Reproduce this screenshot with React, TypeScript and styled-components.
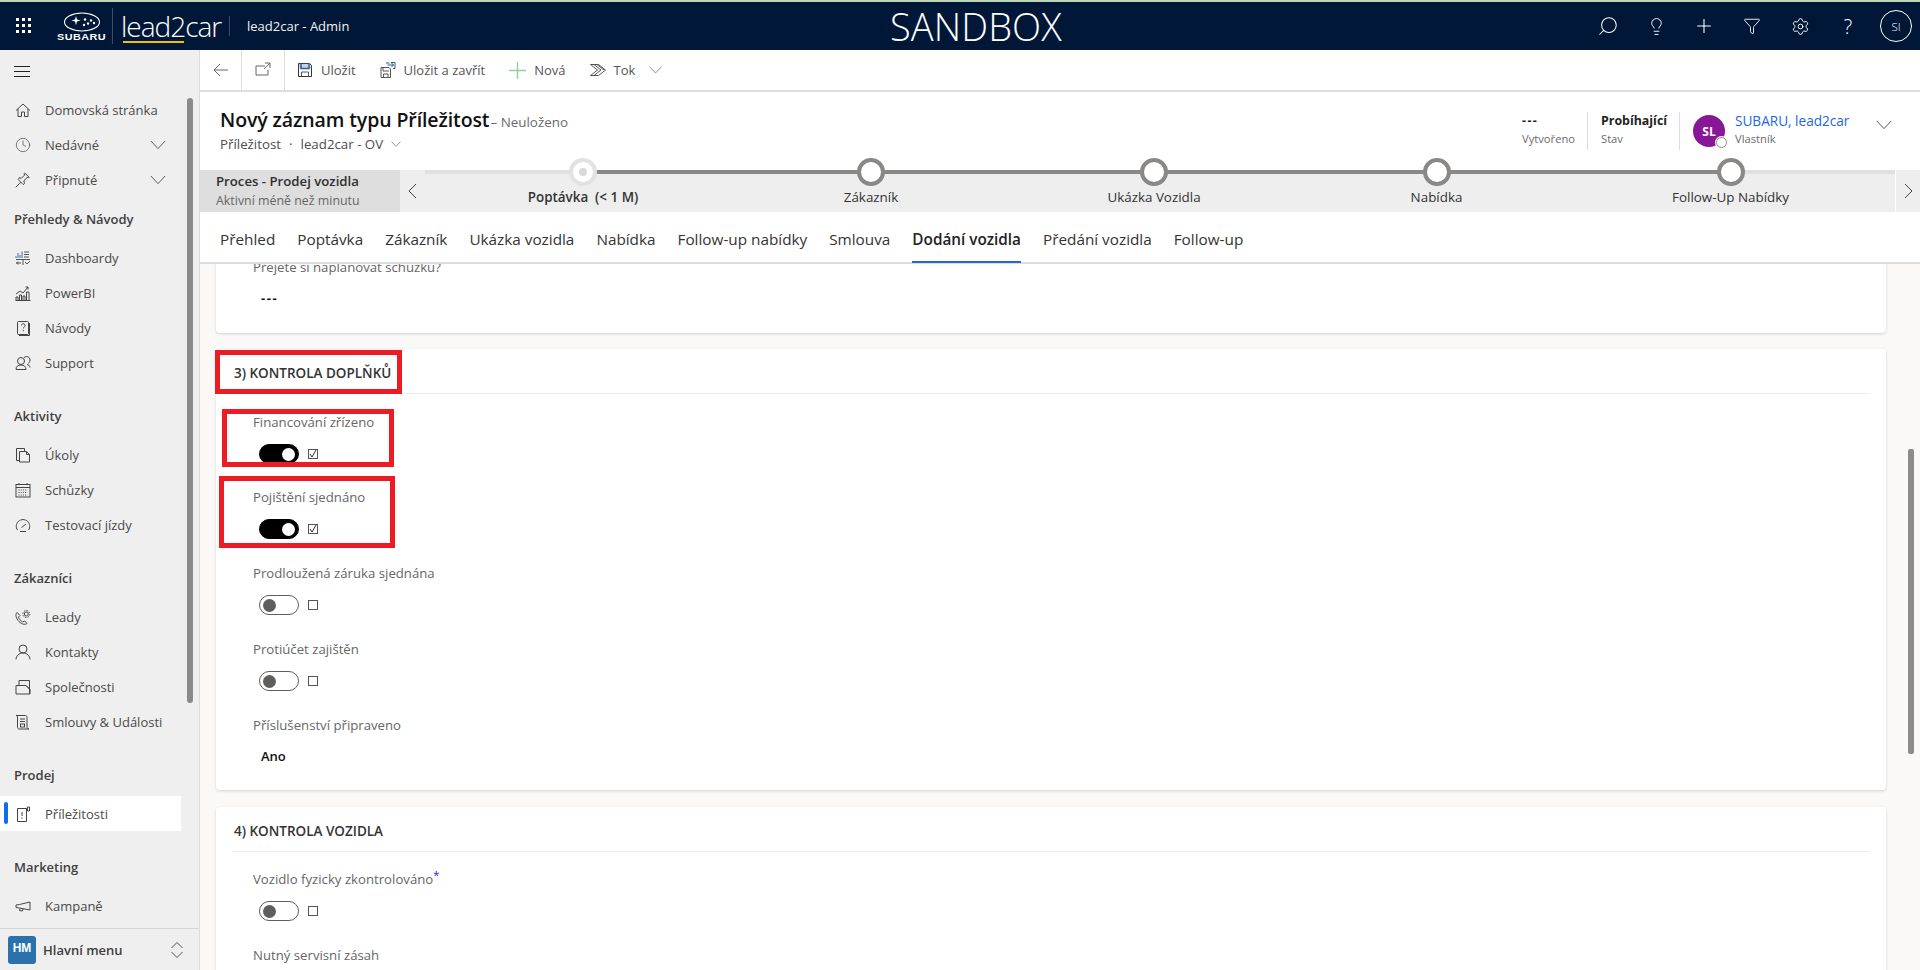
import React from "react";
import styled, { createGlobalStyle } from "styled-components";
import { Clock, Settings, Lightbulb, Funnel, Search, Plus } from "lucide-react";

const Global = createGlobalStyle`
  html, body { margin: 0; padding: 0; height: 100%; overflow: hidden; background: #fff; }
  body { font-family: "Open Sans", "Noto Sans", "Liberation Sans", sans-serif; }
  * { box-sizing: border-box; }
`;

const Page = styled.div`
  width: 1920px; height: 970px; display: flex; flex-direction: column; overflow: hidden;
`;
const TopLine = styled.div`height: 2px; background: #bcd6b6; flex: none;`;
const Header = styled.header`
  height: 48px; flex: none; background: #001737; color: #fff; display: flex; align-items: center; position: relative;
`;
const Waffle = styled.div`
  width: 48px; display: flex; justify-content: center; padding-left: 0;
`;
const SubaruBlock = styled.div`
  margin-left: 9px; width: 50px; display: flex; flex-direction: column; align-items: center;
`;
const SubaruWord = styled.span`
  font-family: "Liberation Sans", sans-serif; font-weight: 700; font-size: 9.5px; line-height: 9px; letter-spacing: 0.4px; transform: scaleX(1.14);
`;
const LogoDivider = styled.div`
  width: 1px; height: 36px; background: #3c4c63; margin-left: 5px;
`;
const BrandWord = styled.span`
  position: relative; margin-left: 8px; font-size: 28px; font-weight: 300; letter-spacing: -1px; line-height: 40px; width: 100px;
`;
const BrandUnderline = styled.i`
  position: absolute; left: 2px; top: 35px; width: 61px; height: 2px; background: #f2c200;
`;
const ShortDivider = styled.div`width: 1px; height: 20px; background: #3c4c63; margin-left: 8px;`;
const AppName = styled.span`margin-left: 17px; font-size: 13px; font-weight: 500; color: #f2f2f2;`;
const Sandbox = styled.div`
  position: absolute; left: 890px; top: 0; line-height: 48px; font-size: 38px; font-weight: 300; letter-spacing: 0.1px;
`;
const HeaderIcons = styled.div`margin-left: auto; display: flex; align-items: center;`;
const HeaderCell = styled.div`
  width: 48px; height: 48px; display: flex; align-items: center; justify-content: center; font-size: 20px; font-weight: 300;
`;
const FlipIcon = styled.span`display: flex; transform: scaleX(-1);`;
const UserCircle = styled.div`
  width: 32px; height: 32px; border: 1px solid #fff; border-radius: 50%; font-size: 11.5px; display: flex; align-items: center; justify-content: center;
`;

const Body = styled.div`flex: 1; display: flex; min-height: 0;`;
const Sidebar = styled.nav`
  width: 200px; flex: none; background: #efefef; border-right: 1px solid #dcdcdc; display: flex; flex-direction: column; position: relative;
`;
const Burger = styled.div`height: 42px; flex: none; padding-left: 14px; display: flex; align-items: center; color: #222;`;
const NavScroll = styled.div`flex: 1; min-height: 0; overflow: hidden;`;
const NavThumb = styled.div`
  position: absolute; left: 187px; top: 48px; width: 6px; height: 605px; border-radius: 3px; background: #8a8a8a;
`;
const NavItem = styled.div<{ $active?: boolean }>`
  height: 35px; width: 181px; display: flex; align-items: center; padding-left: 15px; position: relative;
  font-size: 13px; color: #4a4a4a; background: ${(p) => (p.$active ? "#fff" : "transparent")};
  ${(p) => p.$active && `&::before { content: ""; position: absolute; left: 4px; top: 6px; width: 4px; height: 22px; border-radius: 2px; background: #0f6cf2; }`}
`;
const NavGlyph = styled.span`width: 16px; height: 16px; display: flex; margin-right: 14px; color: #444; flex: none;`;
const NavCaret = styled.span`margin-left: auto; margin-right: 15px; display: flex; color: #555;`;
const GroupTitle = styled.div<{ $first?: boolean }>`
  height: 43px; margin-top: ${(p) => (p.$first ? "0" : "14px")}; padding-left: 14px; display: flex; align-items: center;
  font-size: 13px; font-weight: 600; color: #3f3f3f;
`;
const NavFooter = styled.div`
  height: 42px; flex: none; border-top: 1px solid #d6d6d6; display: flex; align-items: center; padding-left: 8px;
`;
const AreaBadge = styled.div`
  width: 28px; height: 28px; border-radius: 3px; background: #2a72ae; color: #fff; font-family: "Liberation Sans", sans-serif; font-size: 12px; font-weight: 700;
  display: flex; align-items: center; justify-content: center; padding-bottom: 3px;
`;
const AreaName = styled.span`margin-left: 7px; font-size: 13px; font-weight: 600; color: #3f3f3f;`;
const AreaSwitch = styled.span`margin-left: auto; margin-right: 16px; display: flex; color: #555;`;

const Main = styled.main`flex: 1; min-width: 0; display: flex; flex-direction: column;`;
const Toolbar = styled.div`
  height: 42px; flex: none; display: flex; align-items: stretch; border-bottom: 2px solid #dedede; font-size: 13px; color: #555;
`;
const NavButton = styled.div<{ $w: number }>`
  width: ${(p) => p.$w}px; border-right: 1px solid #dedede; display: flex; align-items: center; justify-content: center; color: #666;
`;
const Action = styled.div`
  display: flex; align-items: center; gap: 8px; padding: 0 12px; 
`;
const ActionGroup = styled.div`display: flex;`;
const Caret = styled.span`display: flex; margin-left: 6px; color: #777;`;

const RecordHead = styled.div`
  height: 78px; flex: none; display: flex; justify-content: space-between; padding: 14px 28px 0 20px;
`;
const TitleLine = styled.div`display: flex; align-items: baseline; gap: 1px; height: 27px;`;
const RecordTitle = styled.h1`
  margin: 0; font-size: 19.5px; font-weight: 600; color: #111; line-height: 27px; letter-spacing: -0.1px;
`;
const Unsaved = styled.span`font-size: 13.4px; color: #6b6b6b;`;
const SubLine = styled.div`
  margin-top: 2px; font-size: 13.3px; font-weight: 500; color: #4d4d4d; display: flex; align-items: center; gap: 8px;
`;
const Stats = styled.div`display: flex; align-items: flex-start; padding-top: 6px;`;
const Stat = styled.div<{ $w: number }>`
  width: ${(p) => p.$w}px; height: 38px; margin-right: 13px; border-right: 1px solid #dcdcdc; padding-top: 0;
`;
const StatValue = styled.div`font-size: 12.4px; font-weight: 700; color: #222; line-height: 17px;`;
const StatDash = styled(StatValue)`letter-spacing: 1.4px;`;
const StatLabel = styled.div`font-size: 11.2px; color: #6b6b6b; line-height: 16px; margin-top: 2px;`;
const OwnerAvatar = styled.div`
  width: 32px; height: 32px; border-radius: 50%; background: #881798; color: #fff; position: relative; flex: none; margin-top: 3px;
  font-size: 12px; font-weight: 700; display: flex; align-items: center; justify-content: center;
  &::after { content: ""; position: absolute; right: -2px; bottom: -1px; width: 9px; height: 9px; border-radius: 50%; background: #fff; border: 1.5px solid #8a8a8a; box-shadow: 0 0 0 1px #fff; }
`;
const OwnerText = styled.div`margin-left: 10px; width: 141px;`;
const OwnerName = styled.div`font-size: 13.6px; color: #2266e3; line-height: 17px; font-weight: 500;`;
const OwnerCaret = styled.span`display: flex; margin-top: 8px; color: #555;`;

const ProcessBar = styled.div`
  height: 42px; flex: none; background: #eeeeee; display: flex;
`;
const ProcessInfo = styled.div`
  width: 200px; background: #dedede; padding: 3px 0 0 16px; flex: none;
`;
const ProcessName = styled.div`font-size: 13.2px; font-weight: 600; color: #2f2f2f; line-height: 17px;`;
const ProcessAge = styled.div`font-size: 12.4px; color: #666; line-height: 17px; margin-top: 2px; white-space: nowrap;`;
const ProcessArrow = styled.div<{ $right?: boolean }>`
  width: 25px; flex: none; display: flex; align-items: center; justify-content: center; color: #444;
  ${(p) => p.$right && "border-left: 1px solid #fff;"}
`;
const Stages = styled.div`
  flex: 1; position: relative; display: grid; grid-template-columns: 316px 260px 306px 259px 329px;
  &::before { content: ""; position: absolute; left: 0; right: 0; top: 0; height: 4px; background: #e0e0e0; }
  &::after { content: ""; position: absolute; left: 158px; width: 1147px; top: 0; height: 4px; background: #8a8886; }
`;
const Stage = styled.div`position: relative; text-align: center; padding-top: 18px; font-size: 13.4px; line-height: 18px; color: #333;`;
const StageDot = styled.i<{ $active?: boolean }>`
  position: absolute; z-index: 2; left: 50%; top: -12px; margin-left: -14px; width: 28px; height: 28px; border-radius: 50%; background: #fff;
  border: 4px solid ${(p) => (p.$active ? "#e2e2e2" : "#8a8886")};
  ${(p) => p.$active && `&::after { content: ""; position: absolute; left: 6px; top: 6px; width: 8px; height: 8px; border-radius: 50%; background: #d8d8d8; }`}
`;
const StageActive = styled.span`font-weight: 600; white-space: pre;`;

const Tabs = styled.div`
  height: 52px; flex: none; border-bottom: 2px solid #dcdcdc; display: flex; padding-left: 9px; background: #fff;
`;
const Tab = styled.div<{ $active?: boolean }>`
  padding: 0 11px; position: relative; display: flex; align-items: center; font-size: 15.3px; color: #333; height: 50px; padding-top: 4px; white-space: nowrap;
  ${(p) => p.$active && `font-weight: 600; color: #222; &::after { content: ""; position: absolute; left: 11px; right: 11px; bottom: -1px; height: 2px; background: #2266e3; }`}
`;

const Content = styled.div`
  flex: 1; min-height: 0; background: #faf9f8; overflow: hidden; padding: 0 34px 0 16px; position: relative;
`;
const ContentThumb = styled.div`
  position: absolute; left: 1708px; top: 185px; width: 6px; height: 305px; border-radius: 2px; background: #8c8c8a;
`;
const Card = styled.section`
  background: #fff; border-radius: 4px; box-shadow: 0 1px 3px rgba(0,0,0,.16); position: relative; margin-bottom: 17px;
`;
const CutCard = styled(Card)`
  margin-top: -12px; height: 81px; padding: 5px 0 0 37px; margin-bottom: 16px;
`;
const SectionHead = styled.h2`
  margin: 0 16px; height: 45px; padding: 3px 0 0 2px; display: flex; align-items: center; border-bottom: 1px solid #ececec;
  font-size: 13.5px; font-weight: 550; color: #333;
`;
const Fields = styled.div<{ $lead?: boolean }>`
  padding: ${(p) => (p.$lead ? "18px" : "17px")} 0 0 37px;
  ${(p) => p.$lead && "& > div:first-child { height: 75px; }"}
`;
const Field = styled.div`
  height: 76px; &:last-child { height: 75px; }
`;
const FieldLabel = styled.div`font-size: 13.2px; line-height: 20px; color: #666; white-space: nowrap;`;
const Required = styled.sup`color: #2020e0; font-size: 11px; line-height: 0;`;
const ToggleRow = styled.div`display: flex; align-items: center; margin: 12px 0 0 6px; gap: 9px;`;
const Switch = styled.span<{ $on?: boolean }>`
  width: 40px; height: 20px; border-radius: 10px; position: relative; display: block; flex: none;
  border: 1px solid ${(p) => (p.$on ? "#000" : "#605e5c")}; background: ${(p) => (p.$on ? "#000" : "#fff")};
  &::after {
    content: ""; position: absolute; top: 2.5px; width: 13px; height: 13px; border-radius: 50%;
    ${(p) => (p.$on ? "right: 3px; background: #fff;" : "left: 3px; background: #605e5c;")}
  }
`;
const Box = styled.span`
  width: 10px; height: 10px; border: 1px solid #555; display: flex; align-items: center; justify-content: center; color: #333; flex: none;
`;
const FieldValue = styled.div`font-size: 13px; font-weight: 600; color: #111; margin: 12px 0 0 8px; line-height: 18px;`;
const FieldDash = styled(FieldValue)`letter-spacing: 1.6px; font-weight: 700;`;
const RedFrame = styled.div<{ $l: number; $t: number; $w: number; $h: number }>`
  position: absolute; left: ${(p) => p.$l}px; top: ${(p) => p.$t}px; width: ${(p) => p.$w}px; height: ${(p) => p.$h}px;
  border: 5px solid #ed1c24; pointer-events: none;
`;

type IP = { size?: number };
const S = ({ size = 16, children, vb = "0 0 16 16" }: { size?: number; children: React.ReactNode; vb?: string }) => (
  <svg width={size} height={size} viewBox={vb} fill="none" stroke="currentColor" strokeWidth="1">{children}</svg>
);
const WaffleIcon = () => (
  <svg width="16" height="16" viewBox="0 0 16 16" fill="#fff">
    {[0, 6, 12].flatMap((y) => [0, 6, 12].map((x) => <rect key={`${x}-${y}`} x={x} y={y} width="3" height="3" />))}
  </svg>
);
const SubaruMark = () => (
  <svg width="38" height="20" viewBox="0 0 38 20" fill="none">
    <ellipse cx="19" cy="10" rx="17.5" ry="9" stroke="#fff" strokeWidth="1.1" />
    <path d="M13 4l1 3.6 3.6 1-3.6 1-1 3.6-1-3.6-3.6-1 3.6-1z" fill="#fff" />
    <circle cx="22" cy="7.5" r="1.2" fill="#fff" /><circle cx="28" cy="8.5" r="1.2" fill="#fff" />
    <circle cx="25" cy="11.5" r="1.2" fill="#fff" /><circle cx="31" cy="11" r="1.2" fill="#fff" /><circle cx="21" cy="13" r="1.2" fill="#fff" />
  </svg>
);
const Chevron = ({ size = 16 }: IP) => (
  <svg width={size} height={size * 0.6} viewBox="0 0 16 10" fill="none" stroke="currentColor"><path d="M.5 1l7.5 8 7.5-8" /></svg>
);
const HomeI = () => <S><path d="M1 8.5L8 2l7 6.5M3 7v7.5h3.5V10h3v4.5H13V7" /></S>;
const PinI = () => <S><path d="M.8 15.2l5-5M3.3 7.6l5.1 5.1 1-1-.5-3 3.2-3.2 1.6.3.5-.5L9.7 1l-.5.5.3 1.6-3.2 3.2-2-.7z" /></S>;
const DashI = () => <S><path d="M1 8V6M3 8V3M5 8V5M7 8V1.500" stroke="#4a6f9c" /><path d="M9 2h5M9 4.500h5M9 7h5M1 9.500h14M8 9.500V15M10 12l2 2 3-3" stroke="#555" /><path d="M3 11.500l-1.500 1.500 1.500 1.500M1.500 13H6" /></S>;
const BiI = () => <S><path d="M1 15v-3h2v3M4.500 15v-5h2v5M8 15v-4h2v4M11.500 15V7h2.500v8M.5 15.500h15M1 9l4-3 3 2 5-6M13 2h-2.500M13 2v2.500" /></S>;
const GuideI = () => <S><rect x="2.500" y="1.500" width="11" height="13" rx="1" /><path d="M14.500 3v12.500H4" /><path d="M6.500 5.500c0-2.400 3.500-2.400 3.500 0 0 1.500-1.700 1.500-1.700 3M8.300 10v1.200" /></S>;
const SupportI = () => <S><circle cx="6" cy="6" r="3.500" /><path d="M1 14.500c0-3 2-4.500 5-4.500s5 1.500 5 4.500zM9 2.500c3-2 6-.5 6 2.500 0 2-1 3-2 3.300M12 9.500c1.500.3 3 1.200 3 3" /></S>;
const TaskI = () => <S><path d="M1.500 1.500h8v3M1.500 1.500v12h3M4.500 4.500h7l3 3v7.500h-10zM11.500 4.500v3h3" /></S>;
const CalI = () => <S><rect x="1" y="2.500" width="14" height="12.500" /><path d="M1 5.500h14M4 1v2M12 1v2" /><path d="M3.500 8h9M3.500 10.500h9M3.500 13h9" strokeDasharray="1 1.200" /></S>;
const GaugeI = () => <S><path d="M2.500 13C.5 10.500 1 6.500 3.500 4.300 6 2 10 2 12.500 4.300 15 6.500 15.500 10.500 13.500 13M5 14.500h6M6.500 10.500L11 7" /></S>;
const LeadI = () => <S><path d="M2 3.500c-2 2-1 6 2 9s6 3.500 8 2l-2.300-2.500-2 1C6 12 4 10 3.500 8l1.500-1.500zM3.500 8" /><circle cx="11.300" cy="5" r="2" /><circle cx="11.300" cy="5" r="3.500" strokeDasharray="1.500 1.200" /></S>;
const PersonI = () => <S><circle cx="8" cy="5" r="4" /><path d="M1 15.500c0-3.500 3-6.500 7-6.500s7 3 7 6.500" /></S>;
const CompanyI = () => <S><path d="M1 15V6.500h10L15 10.500V15zM4 6.500V1.500h10.500V15M11 6.500l4 4" /></S>;
const ContractI = () => <S><path d="M1 1.500h9.500c1 0 1.500 1 1.500 2V13c0 1.500 1 2 2 2H4c-1 0-1.500-1-1.500-2V3c0-.8-.5-1.500-1.500-1.500zM5 5h5M5 7.500h5" /><rect x="5.500" y="10" width="4" height="3" /></S>;
const OppI = () => <S><path d="M2.500 2.500h9v13h-9zM12.500 1v4h2V1z" /><path d="M7 6v4M7 11.500v1.300" /></S>;
const MegaI = () => <S><path d="M1 7v2.500l3.500.5 10.500 2V4L4.500 6.500zM5 10.500l-.5 2 3 .5.5-2" /></S>;
const SortI = () => <svg width="12" height="18" viewBox="0 0 12 18" fill="none" stroke="currentColor"><path d="M.5 7L6 1.500 11.500 7M.5 11L6 16.500 11.500 11" /></svg>;
const BackI = () => <S><path d="M15 8H1M7 2L1 8l6 6" /></S>;
const PopI = () => <S><path d="M10 4H1v9h12V8M10 1h5v5M15 1L9 7" /></S>;
const SaveI = () => <S><path d="M1.500 1.500h11l2 2v11h-13z" stroke="#333" /><path d="M4 1.500v5h8v-5" stroke="#2c5a8c" strokeWidth="1.600" /><path d="M4.500 14.500V10h7v4.500" /><rect x="1.500" y="1.500" width="13" height="5" fill="#5d7ea5" fillOpacity=".35" stroke="none" /></S>;
const SaveCloseI = () => <S><path d="M1 5.500h8l1.500 1.500v8.500H1zM3 5.500v3.500h6M3.500 15.500V12h4.500v3.500" /><path d="M6 1h3.500M7.500 3h6M11.500 1l2 2-2 2M11 .5h4v6h-2" stroke="#2c5a8c" /></S>;
const FlowI = () => <S><path d="M.5 2.500h8l7 5.500-7 5.500h-8l7-5.500zM4 2.500l7 5.500-7 5.500M7 2.500l7 5.500" /></S>;
const AddI = () => <svg width="17" height="17" viewBox="0 0 17 17" stroke="#8fd1a5" strokeWidth="1.400"><path d="M8.500 0v17M0 8.500h17" /></svg>;
const MenuI = () => <svg width="16" height="11" viewBox="0 0 16 11" stroke="currentColor"><path d="M0 .5h16M0 5.500h16M0 10.500h16" /></svg>;
const ThinLeft = () => <svg width="9" height="16" viewBox="0 0 9 16" fill="none" stroke="currentColor"><path d="M8 1L1 8l7 7" /></svg>;
const ThinRight = () => <svg width="9" height="16" viewBox="0 0 9 16" fill="none" stroke="currentColor"><path d="M1 1l7 7-7 7" /></svg>;
const CheckI = () => <svg width="8" height="8" viewBox="0 0 8 8" fill="none" stroke="currentColor"><path d="M1 4l2 3 4-7" /></svg>;

type NavEntry = { kind: "title"; text: string; first?: boolean } | { kind: "item"; text: string; icon: React.ReactNode; caret?: boolean; active?: boolean };
const nav: NavEntry[] = [
  { kind: "item", text: "Domovská stránka", icon: <HomeI /> },
  { kind: "item", text: "Nedávné", icon: <Clock size={16} strokeWidth={1} />, caret: true },
  { kind: "item", text: "Připnuté", icon: <PinI />, caret: true },
  { kind: "title", text: "Přehledy & Návody", first: true },
  { kind: "item", text: "Dashboardy", icon: <DashI /> },
  { kind: "item", text: "PowerBI", icon: <BiI /> },
  { kind: "item", text: "Návody", icon: <GuideI /> },
  { kind: "item", text: "Support", icon: <SupportI /> },
  { kind: "title", text: "Aktivity" },
  { kind: "item", text: "Úkoly", icon: <TaskI /> },
  { kind: "item", text: "Schůzky", icon: <CalI /> },
  { kind: "item", text: "Testovací jízdy", icon: <GaugeI /> },
  { kind: "title", text: "Zákazníci" },
  { kind: "item", text: "Leady", icon: <LeadI /> },
  { kind: "item", text: "Kontakty", icon: <PersonI /> },
  { kind: "item", text: "Společnosti", icon: <CompanyI /> },
  { kind: "item", text: "Smlouvy & Události", icon: <ContractI /> },
  { kind: "title", text: "Prodej" },
  { kind: "item", text: "Příležitosti", icon: <OppI />, active: true },
  { kind: "title", text: "Marketing" },
  { kind: "item", text: "Kampaně", icon: <MegaI /> },
];
const tabs = ["Přehled", "Poptávka", "Zákazník", "Ukázka vozidla", "Nabídka", "Follow-up nabídky", "Smlouva", "Dodání vozidla", "Předání vozidla", "Follow-up"];
const stages = ["Zákazník", "Ukázka Vozidla", "Nabídka", "Follow-Up Nabídky"];

const ToggleField = ({ label, on, required }: { label: string; on?: boolean; required?: boolean }) => (
  <Field>
    <FieldLabel>{label}{required && <Required>*</Required>}</FieldLabel>
    <ToggleRow>
      <Switch $on={on} />
      <Box>{on && <CheckI />}</Box>
    </ToggleRow>
  </Field>
);

export default function App() {
  return (
    <Page>
      <Global />
      <TopLine />
      <Header>
        <Waffle><WaffleIcon /></Waffle>
        <SubaruBlock><SubaruMark /><SubaruWord>SUBARU</SubaruWord></SubaruBlock>
        <LogoDivider />
        <BrandWord>lead2car<BrandUnderline /></BrandWord>
        <ShortDivider />
        <AppName>lead2car - Admin</AppName>
        <Sandbox>SANDBOX</Sandbox>
        <HeaderIcons>
          <HeaderCell><FlipIcon><Search size={22} strokeWidth={1.1} /></FlipIcon></HeaderCell>
          <HeaderCell><Lightbulb size={19} strokeWidth={1.2} /></HeaderCell>
          <HeaderCell><Plus size={22} strokeWidth={1.2} /></HeaderCell>
          <HeaderCell><Funnel size={18} strokeWidth={1.2} /></HeaderCell>
          <HeaderCell><Settings size={19} strokeWidth={1.2} /></HeaderCell>
          <HeaderCell>?</HeaderCell>
          <HeaderCell><UserCircle>SI</UserCircle></HeaderCell>
        </HeaderIcons>
      </Header>
      <Body>
        <Sidebar>
          <Burger><MenuI /></Burger>
          <NavScroll>
            {nav.map((n) =>
              n.kind === "title" ? (
                <GroupTitle key={n.text} $first={n.first}>{n.text}</GroupTitle>
              ) : (
                <NavItem key={n.text} $active={n.active}>
                  <NavGlyph>{n.icon}</NavGlyph>
                  {n.text}
                  {n.caret && <NavCaret><Chevron /></NavCaret>}
                </NavItem>
              )
            )}
          </NavScroll>
          <NavThumb />
          <NavFooter>
            <AreaBadge>HM</AreaBadge>
            <AreaName>Hlavní menu</AreaName>
            <AreaSwitch><SortI /></AreaSwitch>
          </NavFooter>
        </Sidebar>
        <Main>
          <Toolbar>
            <NavButton $w={42}><BackI /></NavButton>
            <NavButton $w={43}><PopI /></NavButton>
            <ActionGroup>
              <Action><SaveI />Uložit</Action>
              <Action><SaveCloseI />Uložit a zavřít</Action>
              <Action><AddI />Nová</Action>
              <Action><FlowI />Tok<Caret><Chevron size={13} /></Caret></Action>
            </ActionGroup>
          </Toolbar>
          <RecordHead>
            <div>
              <TitleLine>
                <RecordTitle>Nový záznam typu Příležitost</RecordTitle>
                <Unsaved>– Neuloženo</Unsaved>
              </TitleLine>
              <SubLine><span>Příležitost</span><span>·</span><span>lead2car - OV</span><Chevron size={10} /></SubLine>
            </div>
            <Stats>
              <Stat $w={66}><StatDash>---</StatDash><StatLabel>Vytvořeno</StatLabel></Stat>
              <Stat $w={79}><StatValue>Probíhající</StatValue><StatLabel>Stav</StatLabel></Stat>
              <OwnerAvatar>SL</OwnerAvatar>
              <OwnerText><OwnerName>SUBARU, lead2car</OwnerName><StatLabel>Vlastník</StatLabel></OwnerText>
              <OwnerCaret><Chevron /></OwnerCaret>
            </Stats>
          </RecordHead>
          <ProcessBar>
            <ProcessInfo>
              <ProcessName>Proces - Prodej vozidla</ProcessName>
              <ProcessAge>Aktivní méně než minutu</ProcessAge>
            </ProcessInfo>
            <ProcessArrow><ThinLeft /></ProcessArrow>
            <Stages>
              <Stage><StageDot $active /><StageActive>Poptávka  (&lt; 1 M)</StageActive></Stage>
              {stages.map((s) => <Stage key={s}><StageDot />{s}</Stage>)}
            </Stages>
            <ProcessArrow $right><ThinRight /></ProcessArrow>
          </ProcessBar>
          <Tabs>
            {tabs.map((t) => <Tab key={t} $active={t === "Dodání vozidla"}>{t}</Tab>)}
          </Tabs>
          <Content>
            <CutCard>
              <FieldLabel>Přejete si naplánovat schůzku?</FieldLabel>
              <FieldDash>---</FieldDash>
            </CutCard>
            <Card>
              <SectionHead>3) KONTROLA DOPLŇKŮ</SectionHead>
              <Fields $lead>
                <ToggleField label="Financování zřízeno" on />
                <ToggleField label="Pojištění sjednáno" on />
                <ToggleField label="Prodloužená záruka sjednána" />
                <ToggleField label="Protiúčet zajištěn" />
                <Field>
                  <FieldLabel>Příslušenství připraveno</FieldLabel>
                  <FieldValue>Ano</FieldValue>
                </Field>
              </Fields>
              <RedFrame $l={-1} $t={1} $w={187} $h={44} />
              <RedFrame $l={6} $t={60} $w={172} $h={58} />
              <RedFrame $l={3} $t={127} $w={176} $h={72} />
            </Card>
            <Card>
              <SectionHead>4) KONTROLA VOZIDLA</SectionHead>
              <Fields>
                <ToggleField label="Vozidlo fyzicky zkontrolováno" required />
                <Field><FieldLabel>Nutný servisní zásah</FieldLabel></Field>
              </Fields>
            </Card>
            <ContentThumb />
          </Content>
        </Main>
      </Body>
    </Page>
  );
}
